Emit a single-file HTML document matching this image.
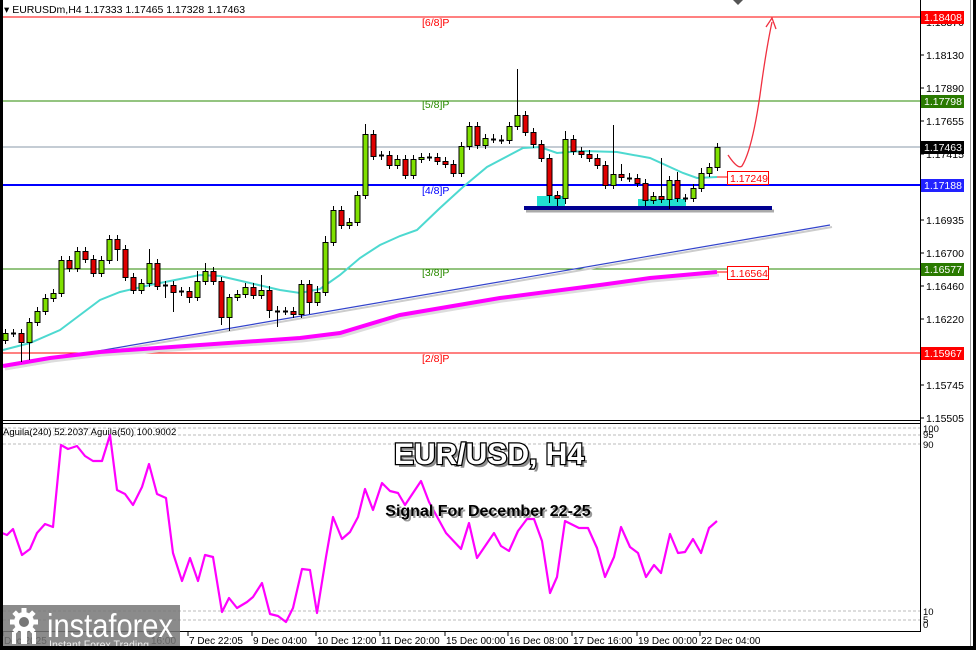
<!DOCTYPE html>
<html><head><meta charset="utf-8"><style>
html,body{margin:0;padding:0;background:#fff;}
body{width:976px;height:650px;overflow:hidden;position:relative;font-family:"Liberation Sans",sans-serif;}
svg{position:absolute;left:0;top:0;font-family:"Liberation Sans",sans-serif;}
</style></head><body>
<svg id="s" width="976" height="650" viewBox="0 0 976 650" xmlns="http://www.w3.org/2000/svg">
<rect x="0" y="0" width="976" height="650" fill="#fff"/>
<g id="g"></g>
</svg>
<script>
const g=document.getElementById('g');let h='';
h+='<line x1="920.5" y1="0" x2="920.5" y2="632" stroke="#000" stroke-width="1"/>';
h+='<line x1="3" y1="420.5" x2="920" y2="420.5" stroke="#000"/>';
h+='<line x1="3" y1="423.5" x2="920" y2="423.5" stroke="#000"/>';
h+='<line x1="3" y1="631.5" x2="920" y2="631.5" stroke="#000"/>';
h+='<line x1="970.5" y1="0" x2="970.5" y2="646" stroke="#999"/>';
[[1.18370,22],[1.18130,55],[1.17890,88],[1.17655,121],[1.17415,154],[1.16935,220],[1.16700,253],[1.16460,286],[1.16220,319],[1.15745,385],[1.15505,418]].forEach(a=>{
 h+=`<line x1="920" y1="${a[1]}" x2="924" y2="${a[1]}" stroke="#000"/><text x="926" y="${a[1]+4}" font-size="10.5" fill="#000">${a[0].toFixed(5)}</text>`;});
const lv=[[17,'#f00','[6/8]P','1.18408','#f00'],[101,'#2a8a00','[5/8]P','1.17798','#2a7a00'],[185,'#00f','[4/8]P','1.17188','#22f'],[269,'#2a8a00','[3/8]P','1.16577','#2a7a00'],[353,'#f00','[2/8]P','1.15967','#f00']];
lv.forEach(l=>{h+=`<line x1="3" y1="${l[0]}" x2="920" y2="${l[0]}" stroke="${l[1]}" stroke-width="${l[0]==185?2:1}"/>`;
 h+=`<text x="422" y="${l[0]+(l[0]==17||l[0]==185||l[0]==353?9:10)+(l[0]==101||l[0]==269?-3:0)}" font-size="10.5" fill="${l[1]}">${l[2]}</text>`;
 h+=`<rect x="921" y="${l[0]-6}" width="43" height="13" fill="${l[4]}"/><text x="924" y="${l[0]+4}" font-size="10.5" fill="#fff">${l[3]}</text>`;});
h+='<line x1="3" y1="147" x2="920" y2="147" stroke="#8899aa"/><rect x="921" y="141" width="43" height="13" fill="#000"/><text x="924" y="151" font-size="10.5" fill="#fff">1.17463</text>';
h+='<line x1="7" y1="369" x2="832" y2="227" stroke="#ccc" stroke-width="2"/>';
h+='<line x1="5" y1="367" x2="830" y2="225" stroke="#3344cc" stroke-width="1.2"/>';
h+='<polyline points="3,366 50,358 100,352 200,345 300,338 340,333 400,315 500,298 600,285 650,278 717,272" fill="none" stroke="#ddd" stroke-width="3" transform="translate(2,3)"/>';
h+='<polyline points="3,366 50,358 100,352 200,345 300,338 340,333 400,315 500,298 600,285 650,278 717,272" fill="none" stroke="#f0f" stroke-width="4"/>';
h+='<line x1="717" y1="272" x2="727" y2="272" stroke="#f00"/><rect x="727.5" y="266.5" width="41" height="13" fill="#fff" stroke="#f00"/><text x="730" y="277" font-size="10.5" fill="#f00">1.16564</text>';
h+='<polyline points="3,350 30,343 60,330 80,315 100,300 120,292 150,285 180,279 200,275 220,276 250,283 280,290 300,293 320,289 340,275 360,258 380,245 400,236 417,230 440,208 463,187 487,167 523,148 540,147 557,153 583,151 617,152 650,158 683,173 697,178 717,177" fill="none" stroke="#4dd9d0" stroke-width="2"/>';
h+='<rect x="537" y="196" width="28" height="11" fill="#22e0d0"/><rect x="638" y="199" width="48" height="8" fill="#22e0d0"/>';
h+='<line x1="526" y1="211" x2="774" y2="211" stroke="#aaa" stroke-width="3"/><line x1="524" y1="208" x2="772" y2="208" stroke="#000090" stroke-width="4"/>';
const C=[333,333,342,322,311,298,293,260,268,251,259,273,260,239,249,277,290,283,263,286,285,292,291,297,281,271,281,317,297,294,287,295,290,310,311,311,314,284,302,292,242,
210,225,222,195,134,156,155,165,159,175,159,157,157,161,164,173,146,126,145,138,139,140,126,115,132,144,158,195,198,139,151,154,158,165,185,174,177,178,183,200,196,199,180,198,198,188,173,167,147];
const HW={141:4,149:14,197:10,205:8,229:3,261:15,293:4,317:6,325:6,357:4,365:10,517:46,565:8,613:49,661:38,621:10,677:8,693:4,701:5};
const LW={21:20,29:18,117:12,125:4,165:12,173:20,189:6,221:8,229:14,269:8,277:16,309:12,549:8,557:8,565:6,669:10,645:6,677:4};
let prev=340;
C.forEach((c,i)=>{const x=5+8*i;const o=prev;prev=c;const top=Math.min(o,c),bot=Math.max(o,c);
 const hw=HW[x]!==undefined?HW[x]:4,lw=LW[x]!==undefined?LW[x]:4;
 h+=`<line x1="${x+.5}" y1="${top-hw}" x2="${x+.5}" y2="${bot+lw}" stroke="#000"/>`;
 if(bot-top<2){h+=`<line x1="${x-2}" y1="${c+.5}" x2="${x+3}" y2="${c+.5}" stroke="#000" stroke-width="2"/>`;}
 else h+=`<rect x="${x-2}" y="${top+.5}" width="5" height="${bot-top}" fill="${c<o?'#7fe000':'#e00000'}" stroke="#000" stroke-width="1"/>`;});
h+='<path d="M728,155 Q738,170 742,166 Q752,150 760,95 Q766,50 772,22" fill="none" stroke="#f03040" stroke-width="1.3"/>';
h+='<path d="M766,27 L772,18 L776,29" fill="none" stroke="#f03040" stroke-width="1.3"/>';
h+='<line x1="717" y1="177" x2="727" y2="177" stroke="#f00"/><rect x="727.5" y="171.5" width="41" height="13" fill="#fff" stroke="#f00"/><text x="730" y="182" font-size="10.5" fill="#f00">1.17249</text>';
h+='<text x="4" y="13" font-size="10.5" fill="#000">▾ EURUSDm,H4  1.17333 1.17465 1.17328 1.17463</text>';
[[428],[435],[444],[611],[620]].forEach(a=>{h+=`<line x1="3" y1="${a[0]}" x2="920" y2="${a[0]}" stroke="#bbb" stroke-dasharray="3,2"/>`;});
[[432,'100'],[438,'95'],[448,'90'],[615,'10'],[623,'5'],[628,'0']].forEach(a=>{h+=`<text x="923" y="${a[0]}" font-size="9.5" fill="#000">${a[1]}</text>`;});
h+='<text x="3" y="435" font-size="9.5" fill="#000">Aguila(240) 52.2037  Aguila(50) 100.9002</text>';
const P='2,533 7,535 13,529 22,555 30,549 37,533 45,524 53,527 61,445 68,449 77,446 85,456 93,461 102,461 110,435 117,490 125,494 133,505 142,487 149,464 157,494 166,498 173,553 182,581 190,558 198,581 205,555 213,557 222,612 229,598 237,608 247,602 253,597 262,583 270,614 278,616 286,622 293,608 302,569 310,570 317,613 326,557 333,517 342,539 350,532 358,517 365,489 373,510 382,483 390,491 398,493 405,505 421,481 429,502 446,533 461,549 469,523 477,558 494,533 501,546 509,551 518,531 527,519 534,519 542,541 550,593 557,577 565,521 579,528 588,528 597,548 605,577 614,557 621,527 630,547 638,553 646,577 654,565 661,573 670,534 678,553 685,552 693,539 701,553 709,528 717,521';
h+=`<polyline points="${P}" fill="none" stroke="#f0f" stroke-width="2.2" stroke-linejoin="round"/>`;
h+='<text x="492" y="467" font-weight="bold" font-size="30" text-anchor="middle" fill="#444" opacity="0.6">EUR/USD, H4</text>';
h+='<text x="489" y="464" font-weight="bold" font-size="30" text-anchor="middle" fill="#fff" stroke="#000" stroke-width="2.5" paint-order="stroke">EUR/USD, H4</text>';
h+='<text x="490" y="518" font-weight="bold" font-size="16" text-anchor="middle" fill="#999">Signal For December 22-25</text>';
h+='<text x="488" y="516" font-weight="bold" font-size="16" text-anchor="middle" fill="#000">Signal For December 22-25</text>';
[[3,'Dec 2025'],[150,'16:00'],[188,'7 Dec 22:05'],[252,'9 Dec 04:00'],[316,'10 Dec 12:00'],[380,'11 Dec 20:00'],[445,'15 Dec 00:00'],[508,'16 Dec 08:00'],[572,'17 Dec 16:00'],[637,'19 Dec 00:00'],[700,'22 Dec 04:00']].forEach(a=>{
 h+=`<line x1="${a[0]}" y1="632" x2="${a[0]}" y2="636" stroke="#000"/><text x="${a[0]+1}" y="644" font-size="10" fill="#000">${a[1]}</text>`;});
h+='<rect x="0" y="605" width="180" height="45" fill="#777" opacity="0.85"/>';
h+='<g fill="#fff"><circle cx="24" cy="622" r="10"/><circle cx="24" cy="622" r="5" fill="#777"/>';
for(let k=0;k<8;k++){h+=`<rect x="21.5" y="608" width="5" height="6" transform="rotate(${k*45} 24 622)"/>`;}
h+='<rect x="21" y="627" width="6" height="17"/><rect x="12" y="632" width="4" height="12"/><rect x="32" y="632" width="4" height="12"/></g>';
h+='<text x="47" y="637" font-size="33" fill="#fff" textLength="126" lengthAdjust="spacingAndGlyphs">instaforex</text>';
h+='<text x="49" y="649" font-size="12" fill="#eee" textLength="100" lengthAdjust="spacingAndGlyphs">Instant Forex Trading</text>';
h+='<rect x="0" y="0" width="3" height="650" fill="#000"/><rect x="0" y="646" width="976" height="4" fill="#000"/><rect x="973" y="0" width="3" height="650" fill="#000"/>';
h+='<path d="M733,0 L743,0 L738,5 Z" fill="#555"/>';
g.innerHTML=h;
</script>
</body></html>
